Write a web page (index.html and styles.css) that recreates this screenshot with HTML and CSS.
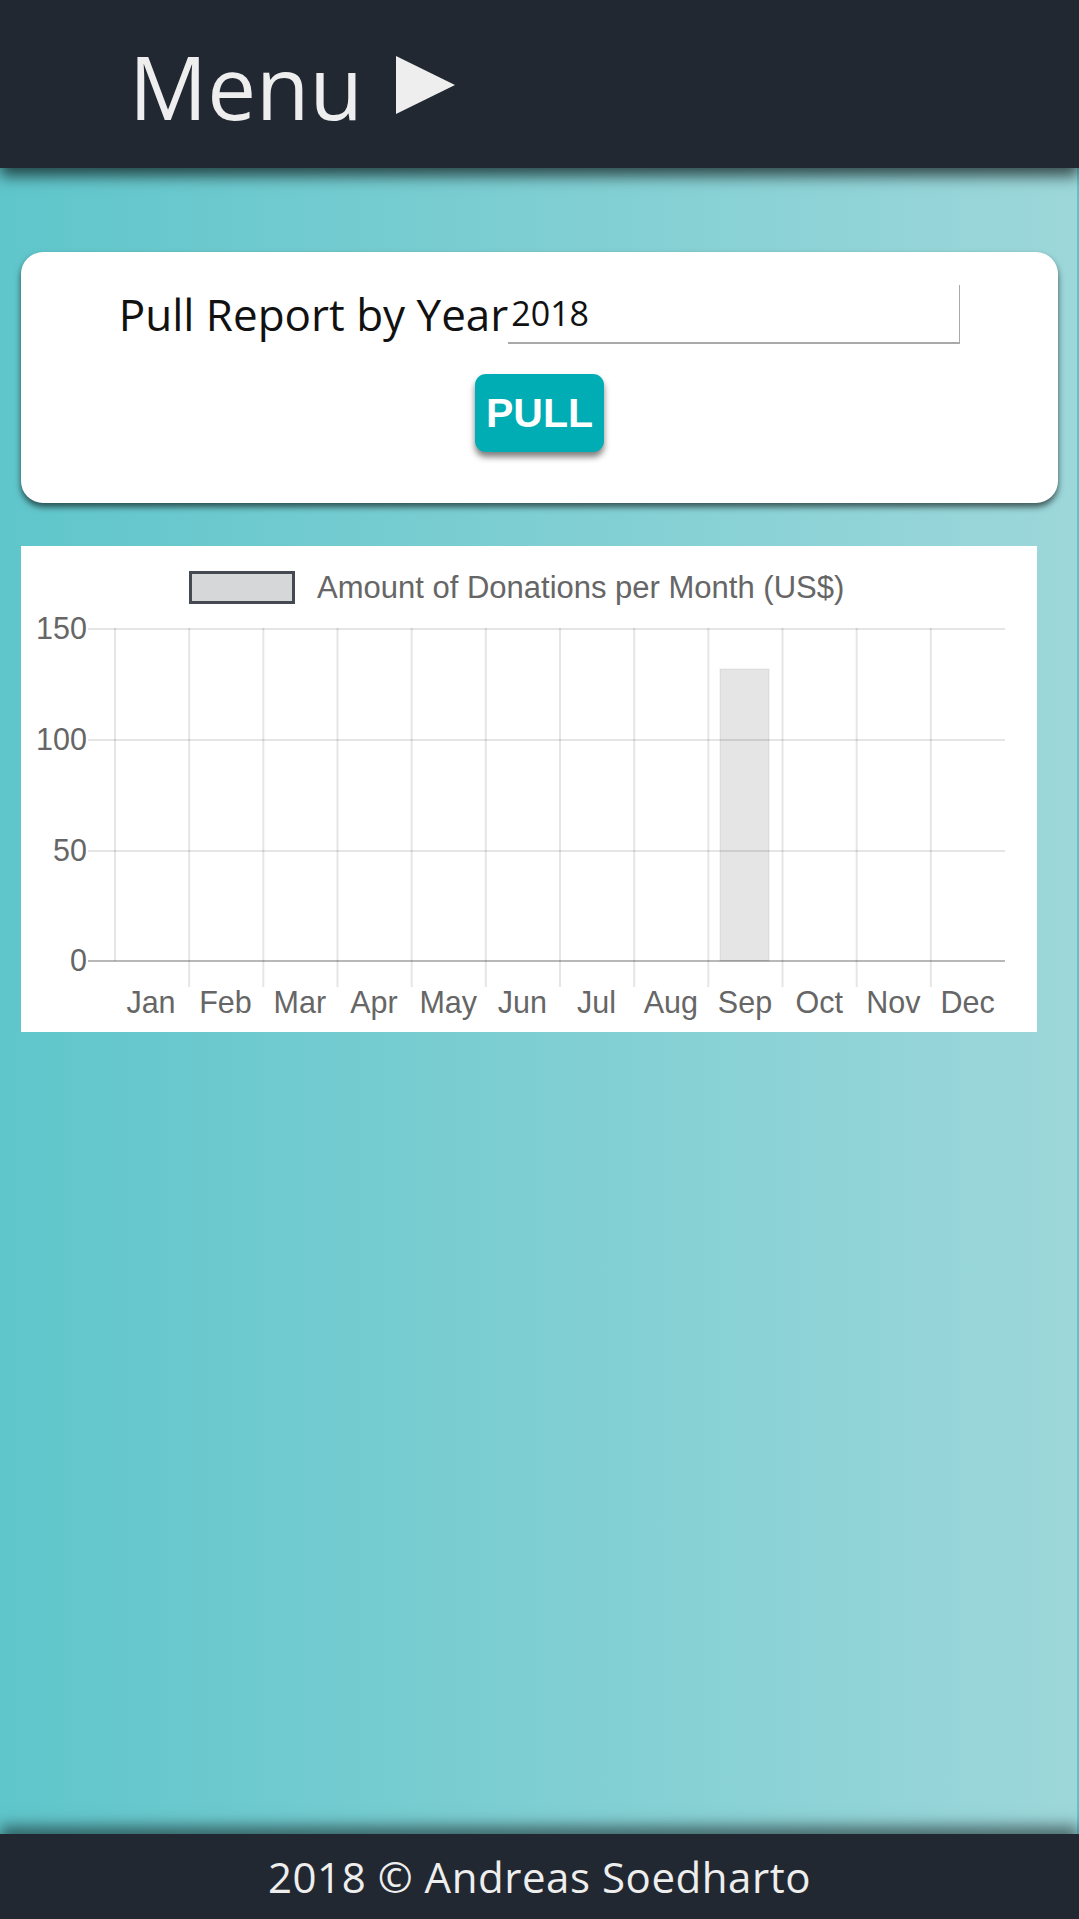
FILE: index.html
```html
<!DOCTYPE html>
<html lang="en">
<head>
<meta charset="utf-8">
<title>Donation Report</title>
<link rel="stylesheet" href="styles.css">
</head>
<body>
<header class="header">
  <span class="menu">Menu</span>
  <svg class="menu-arrow" width="59" height="58" viewBox="0 0 59 58"><polygon points="0,0 59,29 0,58" fill="#eeeeee"/></svg>
</header>
<main class="main">
  <section class="card">
    <div class="row">
      <label class="label" for="year">Pull Report by Year</label>
      <input class="year-input" id="year" type="text" value="2018">
    </div>
    <button class="pull-btn">PULL</button>
  </section>
  <div class="chart">
    <svg width="1016" height="486" viewBox="0 0 1016 486">
      <rect x="169.5" y="26.5" width="103" height="30" fill="#d6d7d9" stroke="#454a52" stroke-width="3"/>
      <text class="legend" x="296" y="52">Amount of Donations per Month (US$)</text>
      <g stroke="rgba(0,0,0,0.1)" stroke-width="2">
        <line x1="67" y1="83" x2="984" y2="83"/>
        <line x1="67" y1="194" x2="984" y2="194"/>
        <line x1="67" y1="305" x2="984" y2="305"/>
        <line x1="94" y1="82" x2="94" y2="415"/>
        <line x1="168.17" y1="82" x2="168.17" y2="441"/>
        <line x1="242.33" y1="82" x2="242.33" y2="441"/>
        <line x1="316.5" y1="82" x2="316.5" y2="441"/>
        <line x1="390.67" y1="82" x2="390.67" y2="441"/>
        <line x1="464.83" y1="82" x2="464.83" y2="441"/>
        <line x1="539" y1="82" x2="539" y2="441"/>
        <line x1="613.17" y1="82" x2="613.17" y2="441"/>
        <line x1="687.33" y1="82" x2="687.33" y2="441"/>
        <line x1="761.5" y1="82" x2="761.5" y2="441"/>
        <line x1="835.67" y1="82" x2="835.67" y2="441"/>
        <line x1="909.83" y1="82" x2="909.83" y2="441"/>
      </g>
      <rect x="699" y="123" width="49" height="292" fill="rgba(0,0,0,0.1)" stroke="rgba(0,0,0,0.04)" stroke-width="2"/>
      <line x1="67" y1="415" x2="984" y2="415" stroke="rgba(0,0,0,0.28)" stroke-width="2"/>
      <g class="ytick">
        <text x="66" y="93">150</text>
        <text x="66" y="204">100</text>
        <text x="66" y="315">50</text>
        <text x="66" y="425">0</text>
      </g>
      <g class="xtick">
        <text x="130" y="467">Jan</text>
        <text x="204.5" y="467">Feb</text>
        <text x="278.8" y="467">Mar</text>
        <text x="353" y="467">Apr</text>
        <text x="427.2" y="467">May</text>
        <text x="501.4" y="467">Jun</text>
        <text x="575.6" y="467">Jul</text>
        <text x="649.8" y="467">Aug</text>
        <text x="724" y="467">Sep</text>
        <text x="798.2" y="467">Oct</text>
        <text x="872.4" y="467">Nov</text>
        <text x="946.6" y="467">Dec</text>
      </g>
    </svg>
  </div>
</main>
<footer class="footer">2018 © Andreas Soedharto</footer>
</body>
</html>
```

FILE: styles.css
```css
* { box-sizing: border-box; }
html, body { margin: 0; padding: 0; }
body {
  background: #57c7cc;
  min-height: 100vh;
  display: flex;
  flex-direction: column;
  font-family: "Open Sans", "Liberation Sans", sans-serif;
}
.header {
  position: relative;
  z-index: 2;
  height: 168px;
  background: #222831;
  display: flex;
  align-items: center;
  padding-left: 129px;
  box-shadow: 0 8px 14px rgba(0, 0, 0, 0.65);
}
.menu {
  color: #eeeeee;
  font-size: 87px;
  line-height: 1;
  margin-top: 4px;
}
.menu-arrow {
  margin-left: 33px;
  margin-top: 2px;
}
.main {
  flex: 1;
  margin-right: 2px;
  background: linear-gradient(to right, #5fc6cb, #9dd7da);
  padding: 84px 19px 40px 21px;
}
.card {
  background: #ffffff;
  border-radius: 22px;
  height: 251px;
  padding-top: 32px;
  display: flex;
  flex-direction: column;
  align-items: center;
  box-shadow: 0 4px 6px rgba(0, 0, 0, 0.6);
}
.row {
  display: flex;
  align-items: center;
  justify-content: center;
}
.label {
  font-size: 44px;
  color: #111;
  white-space: nowrap;
}
.year-input {
  width: 452px;
  height: 59px;
  border: none;
  border-right: 1px solid #a9a9a9;
  border-bottom: 2px solid #a9a9a9;
  font-family: "Open Sans", "Liberation Sans", sans-serif;
  font-size: 34px;
  color: #111;
  padding: 0 3px;
  outline: none;
  background: #fff;
}
.pull-btn {
  margin-top: 30px;
  width: 129px;
  height: 78px;
  border: none;
  border-radius: 11px;
  background: #00adb5;
  color: #ffffff;
  font-family: "Liberation Sans", Arial, sans-serif;
  font-weight: bold;
  font-size: 41px;
  padding: 0;
  box-shadow: 0 5px 6px rgba(0, 0, 0, 0.5);
}
.chart {
  margin-top: 43px;
  width: 1016px;
  height: 486px;
  background: #ffffff;
}
.chart svg { display: block; }
.legend {
  font-family: "Liberation Sans", Arial, sans-serif;
  font-size: 31px;
  fill: #666666;
}
.ytick text {
  font-family: "Liberation Sans", Arial, sans-serif;
  font-size: 30.5px;
  fill: #666666;
  text-anchor: end;
}
.xtick text {
  font-family: "Liberation Sans", Arial, sans-serif;
  font-size: 30.5px;
  fill: #666666;
  text-anchor: middle;
}
.footer {
  position: relative;
  z-index: 2;
  height: 85px;
  background: #222831;
  color: #eeeeee;
  font-size: 42px;
  letter-spacing: 0.55px;
  text-align: center;
  line-height: 85px;
  box-shadow: 0 -8px 14px rgba(0, 0, 0, 0.5);
}
```
